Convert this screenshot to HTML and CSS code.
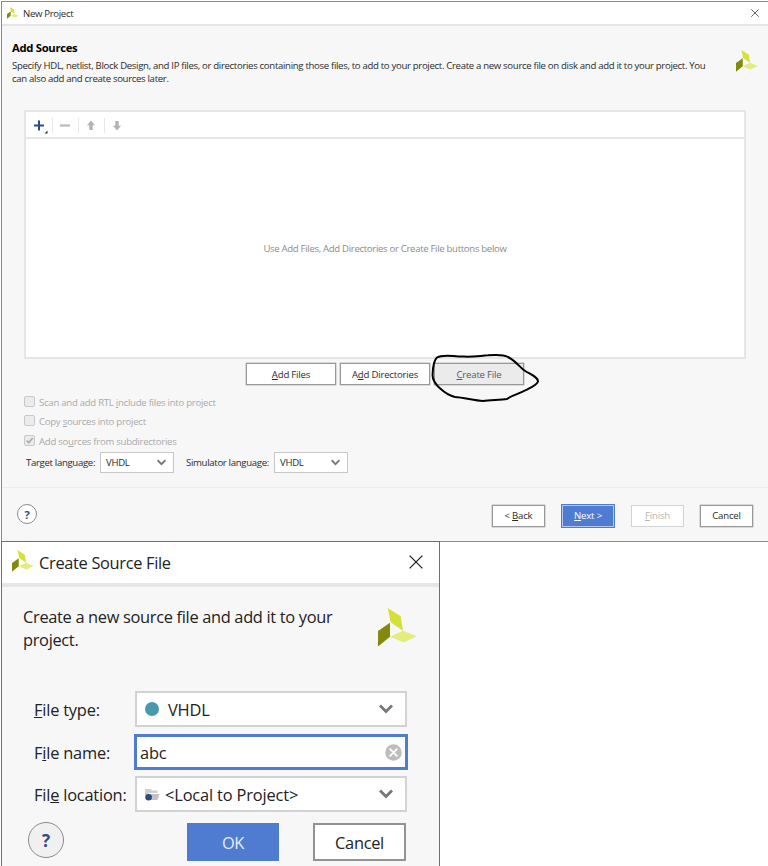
FILE: index.html
```html
<!DOCTYPE html>
<html lang="en">
<head>
<meta charset="utf-8">
<title>New Project</title>
<link rel="stylesheet" href="styles.css">
</head>
<body>
<svg class="defs" width="0" height="0">
  <symbol id="logo" viewBox="0 0 39 39">
    <path fill="#d5e13a" d="M9.7 0 22.7 8.3 25 22.7 12.7 14.3Z"/>
    <path fill="#828a0c" d="M0 23 12 14.7V28.7L0 38.5Z"/>
    <path fill="#e4eb7f" d="M12 28.7 25 22.7 38.8 28.3 25.7 34.4Z"/>
  </symbol>
  <symbol id="close" viewBox="0 0 14 14"><path d="M.6.6 13.4 13.4M13.4.6.6 13.4" fill="none" stroke="currentColor" stroke-width="1.3"/></symbol>
  <symbol id="chevron" viewBox="0 0 14 10"><path d="M1 1.5 7 7.5 13 1.5" fill="none" stroke="#777" stroke-width="2.8"/></symbol>
</svg>
<main class="window">
  <header class="titlebar">
    <svg class="titlebar-logo"><use href="#logo"/></svg>
    <span class="titlebar-text">New Project</span>
    <svg class="titlebar-close"><use href="#close"/></svg>
  </header>
  <section class="intro">
    <div class="intro-text">
      <h1>Add Sources</h1>
      <p><span class="line1">Specify HDL, netlist, Block Design, and IP files, or directories containing those files, to add to your project. Create a new source file on disk and add it to your project. You</span><br><span class="line2">can also add and create sources later.</span></p>
    </div>
    <svg class="intro-logo"><use href="#logo"/></svg>
  </section>
  <section class="panel">
    <div class="toolbar">
      <svg class="tool" viewBox="0 0 26 24"><path d="M8 12.5h10M13 7.5v10" stroke="#2b4a86" stroke-width="2" fill="none"/><path d="M21.500 17.500v3h-3z" fill="#333"/></svg>
      <svg class="tool" viewBox="0 0 26 24"><path d="M8 12.500h10" stroke="#b9b9b9" stroke-width="2.200"/></svg>
      <svg class="tool" viewBox="0 0 26 24"><path d="M13 7.500l4 4.700h-2.300V17h-3.400v-4.800H9z" fill="#b3b3b3"/></svg>
      <svg class="tool" viewBox="0 0 26 24"><path d="M13 17.500l4-4.700h-2.300V8h-3.400v4.800H9z" fill="#b3b3b3"/></svg>
    </div>
    <div class="empty"><span>Use Add Files, Add Directories or Create File buttons below</span></div>
  </section>
  <div class="source-actions">
    <button class="btn"><span><u>A</u>dd Files</span></button>
    <button class="btn"><span>A<u>d</u>d Directories</span></button>
    <button class="btn pressed"><span><u>C</u>reate File</span>
      <svg class="scribble" viewBox="430 350 112 54"><path d="M488 355.300C496 354.600 503 354.200 508 357C516 361 520 368 526 371.500C532 375 538 377.500 538 381.500C537 385 532 387 526 390C519 394 512 395 507 399C500 400 490 400 483 401C474 400.500 464 397.500 455 397C446 395 432 384 432.600 374.500C432.800 369 434 360 437 357.500C444 353.500 454 357 464 356.600C473 357 480 355.800 488 355.300"/></svg>
    </button>
  </div>
  <section class="options">
    <label class="check"><i class="box"></i><span>Scan and add RTL <u>i</u>nclude files into project</span></label>
    <label class="check"><i class="box"></i><span>Copy <u>s</u>ources into project</span></label>
    <label class="check"><i class="box"><svg viewBox="0 0 10 10"><path d="M1.800 5 4.200 7.500 8.500 2.300" fill="none" stroke="#aaa" stroke-width="1.800"/></svg></i><span>Add so<u>u</u>rces from subdirectories</span></label>
    <div class="languages">
      <span class="target">Target language:</span>
      <div class="combo"><span>VHDL</span><svg><use href="#chevron"/></svg></div>
      <span class="simulator">Simulator language:</span>
      <div class="combo"><span>VHDL</span><svg><use href="#chevron"/></svg></div>
    </div>
  </section>
  <footer class="footer">
    <button class="help">?</button>
    <button class="btn"><span>&lt; <u>B</u>ack</span></button>
    <button class="btn primary"><span><u>N</u>ext &gt;</span></button>
    <button class="btn disabled"><span><u>F</u>inish</span></button>
    <button class="btn"><span>Cancel</span></button>
  </footer>
</main>
<section class="dialog">
  <header class="dialog-title">
    <svg class="dialog-mark"><use href="#logo"/></svg>
    <span class="d-title">Create Source File</span>
    <svg class="dialog-close"><use href="#close"/></svg>
  </header>
  <div class="dialog-intro">
    <p><span>Create a new source file and add it to your</span><br><span>project.</span></p>
    <svg class="dialog-logo"><use href="#logo"/></svg>
  </div>
  <div class="fields">
    <div class="field"><span class="label"><u>F</u>ile type:</span>
      <div class="select"><i class="dot"></i><span class="v1">VHDL</span><svg class="chev"><use href="#chevron"/></svg></div></div>
    <div class="field"><span class="label">F<u>i</u>le name:</span>
      <div class="input"><span>abc</span><svg class="clear" viewBox="0 0 17 17"><circle cx="8.500" cy="8.500" r="8.300" fill="#bdbdbd"/><path d="M4.700 4.700l7.600 7.600M12.300 4.700l-7.600 7.600" stroke="#fff" stroke-width="1.900"/></svg></div></div>
    <div class="field"><span class="label">Fil<u>e</u> location:</span>
      <div class="select"><svg class="folder" viewBox="0 0 15 13"><path d="M0 1h6l1 1.500h5.500V5H4L3 8H0z" fill="#d0d0d0"/><path d="M4.500 6H14.500L12.500 12H5z" fill="#c2c2c2"/><circle cx="3.600" cy="9.300" r="3.300" fill="#2b4a86"/></svg><span class="v3">&lt;Local to Project&gt;</span><svg class="chev"><use href="#chevron"/></svg></div></div>
  </div>
  <div class="dialog-actions">
    <button class="help large">?</button>
    <button class="ok">OK</button>
    <button class="cancel">Cancel</button>
  </div>
</section>
</body>
</html>
```

FILE: styles.css
```css
* { box-sizing: border-box; }
body { margin: 0; height: 866px; overflow: hidden; background: #fff; font-family: "Open Sans", "Noto Sans", sans-serif; font-size: 9.600px; letter-spacing: -.32px; color: #2b2b2b; }
svg, i { display: block; flex: none; }
.defs { position: absolute; }
button { font: inherit; color: inherit; letter-spacing: inherit; padding: 0; margin: 0; white-space: nowrap; }
span { white-space: nowrap; }
u { text-decoration-thickness: 1px; text-underline-offset: 1px; }
h1, p { margin: 0; }

.window { height: 541px; margin: 1px 0 0 1px; border: 1px solid #8b8b8b; border-right: 0; background: #f7f7f7; }
.titlebar { height: 24px; display: flex; align-items: center; padding: 0 9px 0 5px; background: #fff; border-bottom: 2px solid #e6e6e6; }
.titlebar-logo { width: 12px; height: 12px; }
.titlebar-text { margin-left: 4px; }
.titlebar-close { width: 8px; height: 8px; margin-left: auto; }
.intro { height: 84px; display: flex; justify-content: space-between; padding: 14px 10px 0 10px; }
h1 { font-size: 11.300px; line-height: 15px; color: #000; }
.intro p { margin-top: 4px; line-height: 13px; }
.intro-logo { width: 22px; height: 22px; margin: 10px 0 0 0; }

.panel { width: 722px; height: 249px; margin-left: 22px; background: #fff; border: 2px solid #e6e6e6; display: flex; flex-direction: column; }
.toolbar { height: 27px; display: flex; align-items: center; border-bottom: 2px solid #e6e6e6; flex: none; }
.tool { width: 26px; height: 24px; }
.tool + .tool { background: linear-gradient(#e6e6e6, #e6e6e6) no-repeat 0 5px / 1px 15px; }
.empty { flex: 1; display: flex; align-items: center; justify-content: center; color: #8c8c8c; }

.btn { display: flex; align-items: center; justify-content: center; height: 22px; background: #fff; border: 1px solid #989898; box-shadow: 0 0 0 .3px #989898; }
.source-actions { display: flex; gap: 4px; margin: 4px 0 0 244px; }
.source-actions .btn { width: 90px; letter-spacing: -.2px; }
.pressed { position: relative; background: #ebebeb; color: #5a5a5a; }
.scribble { position: absolute; left: -5px; top: -14px; width: 112px; height: 54px; fill: none; stroke: #000; stroke-width: 2; stroke-linejoin: round; }

.options { margin: 8px 0 0 22px; height: 94px; }
.check { display: flex; align-items: center; gap: 4px; height: 19.300px; color: #aaa; letter-spacing: -.27px; }
.box { width: 11px; height: 11px; border: 1px solid #c9c9c9; border-radius: 2px; background: #eaebec; margin-top: -2px; }
.box svg { width: 9px; height: 9px; }
.languages { display: flex; align-items: center; margin-top: 1px; height: 22px; padding-left: 2px; }
.target { width: 74px; }
.simulator { width: 88px; margin-left: 12px; }
.combo { width: 74px; height: 21px; display: flex; align-items: center; justify-content: space-between; padding: 0 7px 0 5px; background: #fff; border: 1px solid #c8c8c8; }
.combo svg { width: 9px; height: 7px; }

.footer { height: 54px; display: flex; align-items: center; border-top: 1px solid #ececec; padding: 0 15px 0 15px; letter-spacing: -.2px; }
.footer .btn { width: 53px; margin-left: 16px; margin-top: 2px; }
.footer .help + .btn { margin-left: auto; }
.footer .btn.primary { width: 54px; height: 24px; color: #fff; background: #4f7cd1; border: 1px solid #4f7cd1; box-shadow: inset 0 0 0 1px #b4c7ec; }
.btn.disabled { color: #b5b5b5; border-color: #d2d2d2; box-shadow: none; }
.help { width: 20px; height: 20px; border: 1px solid #8a8a8a; border-radius: 50%; background: #fff; color: #2b4a86; font-weight: 700; font-size: 11px; line-height: 1; }
.footer .help { margin-top: -1px; }

.dialog { width: 439px; height: 340px; margin: -1px 0 0 1px; border: 1px solid #6f6f6f; background: #f7f7f7; font-size: 16.400px; letter-spacing: -.32px; color: #222; }
.dialog-title { display: flex; align-items: center; height: 45px; padding: 0 16px 0 10px; background: #fff; border-bottom: 4px solid #e6e6e6; }
.dialog-mark { width: 22px; height: 22px; margin-top: -3px; }
.d-title { margin-left: 5px; }
.dialog-close { width: 14px; height: 14px; margin-left: auto; margin-top: -1px; }
.dialog-intro { display: flex; justify-content: space-between; height: 103px; padding: 18px 22px 0 21px; line-height: 23px; }
.dialog-logo { width: 39px; height: 39px; margin-top: 3px; }
.fields { display: flex; flex-direction: column; gap: 6px; padding-top: 1px; }
.field { display: flex; align-items: center; padding-left: 32px; height: 36px; }
.field:first-child .select { height: 36px; }
.label { width: 101px; letter-spacing: -.2px; }
.select, .input { display: flex; align-items: center; background: #fff; border: 2px solid #d2d2d2; letter-spacing: -.15px; }
.select { width: 272px; height: 36px; padding: 0 12px 0 8px; }
.input { width: 274px; height: 36px; padding: 0 3px; border: 3px solid #4f7cd1; margin-left: -1px; }
.field:nth-child(2) { margin-top: 1px; }
.dot { width: 14px; height: 14px; border-radius: 50%; background: #4a98ae; }
.v1 { margin-left: 9px; }
.chev { width: 14px; height: 10px; margin-left: auto; }
.clear { width: 17px; height: 17px; margin-left: auto; }
.folder { width: 15px; height: 13px; }
.v3 { margin-left: 5px; }
.dialog-actions { display: flex; align-items: flex-start; padding: 11px 0 0 26px; }
.help.large { width: 36px; height: 36px; font-size: 17px; background: #f0f0f0; margin-top: -1px; }
.ok, .cancel { height: 38px; }
.ok { width: 92px; margin-left: 123px; color: #e6edfa; background: #4f7cd1; border: 0; }
.cancel { width: 93px; margin-left: 34px; background: #fff; border: 2px solid #939393; }
```
